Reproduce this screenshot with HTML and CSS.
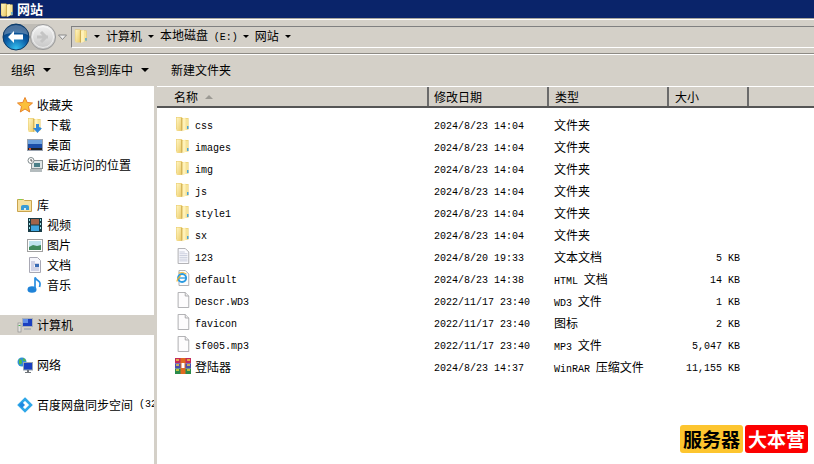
FILE: index.html
```html
<!DOCTYPE html>
<html lang="zh-CN">
<head>
<meta charset="utf-8">
<title>网站</title>
<link rel="stylesheet" href="styles.css">
</head>
<body>
<svg class="defs" width="0" height="0">
  <defs>
    <linearGradient id="fy" x1="0" y1="0" x2="1" y2="1"><stop offset="0" stop-color="#fff6c4"/><stop offset="1" stop-color="#eccb68"/></linearGradient>
    <symbol id="folder" viewBox="0 0 16 16">
      <path d="M1 1h5.500l1 1h6v11.500H1z" fill="#e8c763"/>
      <path d="M1.500 1.500h5v13l-1 .5H1.500z" fill="url(#fy)"/>
      <path d="M6.500 2.500h6.500v11H6.500z" fill="#f6e398"/>
      <path d="M7.500 2.500l3-1v12.500l-3 1.500z" fill="#fff2b8"/>
      <path d="M6.800 2v13" stroke="#cba748" stroke-width="1"/>
      <path d="M12 10h1.500v3H12z" fill="#4aa3d8"/>
    </symbol>
    <symbol id="page" viewBox="0 0 16 18">
      <path d="M2.500 .5h8l4 4v13h-12z" fill="#fdfcfd" stroke="#a5a5a8"/>
      <path d="M10.500 .5v4h4" fill="#eee" stroke="#a5a5a8"/>
    </symbol>
    <symbol id="textpage" viewBox="0 0 16 18">
      <path d="M2.500 .5h8l4 4v13h-12z" fill="#fafafe" stroke="#a5a5a8"/>
      <path d="M4 4.500h6M4 6.500h9M4 8.500h9M4 10.500h9M4 12.500h9M4 14.500h9" stroke="#c3c8d8"/>
    </symbol>
  </defs>
</svg>
<div class="window">
  <header class="titlebar">
    <svg class="ico-title"><use href="#folder"/></svg>
    <span class="title-text">网站</span>
  </header>

  <div class="navbar">
    <svg class="nav-btns" viewBox="0 0 68 28" width="68" height="28">
      <defs>
        <radialGradient id="bk" cx=".5" cy=".95" r=".8"><stop offset="0" stop-color="#35c0f0"/><stop offset=".6" stop-color="#0a5ca6"/><stop offset="1" stop-color="#063c78"/></radialGradient>
        <linearGradient id="fw" x1="0" y1="0" x2="0" y2="1"><stop offset="0" stop-color="#f2f2f2"/><stop offset="1" stop-color="#c5c5c5"/></linearGradient>
      </defs>
      <path d="M15 1h27a13 13 0 0 1 0 26H15z" fill="#bfbcb6"/>
      <circle cx="42" cy="14" r="12.500" fill="url(#fw)" stroke="#9a9a9a"/>
      <path d="M49 14h-11M42 9l5 5-5 5" transform="translate(-2 0) rotate(0)" fill="none" stroke="#c4c4c4" stroke-width="3"/>
      <circle cx="42" cy="14" r="10.500" fill="none" stroke="#fff" stroke-opacity=".6"/>
      <circle cx="15" cy="14" r="13" fill="url(#bk)" stroke="#0d3a66"/>
      <path d="M3 12a12 10 0 0 1 24 0c-6-3-18-3-24 0z" fill="#fff" fill-opacity=".28"/>
      <path d="M7 14l6-6v3.500h9v5h-9V20z" fill="#fff"/>
      <path d="M57.500 12h8l-4 4.500z" fill="#eee" stroke="#8a8a8a"/>
    </svg>
    <div class="address">
      <svg class="ico-addr"><use href="#folder"/></svg>
      <i class="arrow a-first"></i><span class="crumb">计算机</span>
      <i class="arrow"></i><span class="crumb">本地磁盘 <span class="lat">(E:)</span></span>
      <i class="arrow"></i><span class="crumb">网站</span>
      <i class="arrow"></i>
    </div>
  </div>

  <div class="cmdbar">
    <span class="cmd">组织<i class="arrow big"></i></span>
    <span class="cmd">包含到库中<i class="arrow big"></i></span>
    <span class="cmd">新建文件夹</span>
  </div>

  <main class="body">
    <nav class="side">
      <ul class="tree">
        <li class="top"><svg class="ic" viewBox="0 0 16 16"><path d="M8 .5l2.200 5 5.300.5-4 3.500 1.200 5.500L8 12l-4.700 3 1.200-5.500-4-3.500 5.300-.5z" fill="#fbc03a" stroke="#e8842a"/></svg>收藏夹</li>
        <li class="sub"><svg class="ic"><use href="#folder"/></svg><svg class="ic over" viewBox="0 0 16 16"><path d="M9 7h3v4h3l-4.500 5L6 11h3z" fill="#2f86d8"/></svg>下载</li>
        <li class="sub"><svg class="ic" viewBox="0 0 16 16"><rect x=".5" y="2.500" width="15" height="11" fill="#1c4fa8" stroke="#9aa3b0"/><rect x="1" y="3" width="14" height="4" fill="#6ea2dc"/><rect x="1" y="11" width="14" height="2" fill="#222"/><rect x="2" y="11" width="2" height="2" fill="#d8532a"/></svg>桌面</li>
        <li class="sub"><svg class="ic" viewBox="0 0 16 16"><rect x="4.500" y="3.500" width="11" height="8" fill="#dfe5e6" stroke="#8a9396"/><rect x="7" y="6" width="6" height="4" fill="#4a7f88"/><rect x="3" y="12" width="12" height="3" fill="#b4bcbe"/><circle cx="4" cy="3.500" r="3" fill="#fff" stroke="#7f8a8c"/><path d="M4 2v2h1.500" stroke="#555" fill="none"/></svg>最近访问的位置</li>
        <li class="gap"></li>
        <li class="top"><svg class="ic" viewBox="0 0 16 16"><path d="M.5 2.500h6l1 1h7v11H.5z" fill="#f6e0a0" stroke="#c9a44e"/><rect x="2" y="2" width="3" height="1" fill="#7ed14a"/><path d="M4 13V9.500q0-1.500 2-1.500h4q2 0 2 1.500V13z" fill="#3a9ad6"/><path d="M7 13v-2h2v2z" fill="#d6ecf8"/></svg>库</li>
        <li class="sub"><svg class="ic" viewBox="0 0 16 16"><rect x="1" y="1" width="14" height="14" fill="#183b46"/><rect x="4" y="2" width="8" height="5.500" fill="#a0634a"/><rect x="4" y="8.500" width="8" height="5.500" fill="#3fa5e0"/><path d="M2 2h1v2H2zM2 6h1v2H2zM2 10h1v2H2zM13 2h1v2h-1zM13 6h1v2h-1zM13 10h1v2h-1z" fill="#9fe4e8"/></svg>视频</li>
        <li class="sub"><svg class="ic" viewBox="0 0 16 16"><rect x=".5" y="2.500" width="15" height="12" fill="#fff" stroke="#a0a0a0"/><rect x="2" y="4" width="12" height="9" fill="#bfe3ee"/><path d="M2 10l4-2 4 1 4-1v5H2z" fill="#3f8a5c"/></svg>图片</li>
        <li class="sub"><svg class="ic" viewBox="0 0 16 16"><path d="M2.500.5h8l3 3v12h-11z" fill="#f6f6fc" stroke="#a8a8b4"/><path d="M4 5h4M4 7h8M4 9h3M4 11h8M4 13h8" stroke="#a9aed0"/><rect x="8" y="7" width="4" height="3" fill="#3a6bb4"/></svg>文档</li>
        <li class="sub"><svg class="ic" viewBox="0 0 16 16"><ellipse cx="5" cy="12.500" rx="4.500" ry="3.200" fill="#1f83d8"/><path d="M8 12V.5q1 2 3.500 3.500t1 6" fill="none" stroke="#2a8ee0" stroke-width="1.700"/></svg>音乐</li>
        <li class="gap"></li>
        <li class="top selected"><svg class="ic" viewBox="0 0 16 16"><rect x="5.500" y="1.500" width="10" height="8" fill="#1a3fc0" stroke="#a8b0b8"/><rect x="6" y="2" width="5" height="4" fill="#5f8de8"/><rect x="7" y="11" width="7" height="2" fill="#b0b4b8"/><rect x="1" y="6" width="3" height="9" fill="#e4e4e0" stroke="#909090" stroke-width=".7"/><rect x="1.500" y="8" width="2" height="1" fill="#4caf50"/></svg>计算机</li>
        <li class="gap"></li>
        <li class="top"><svg class="ic" viewBox="0 0 16 16"><circle cx="5" cy="5" r="4.500" fill="#2f8fd8"/><path d="M2 2q3 0 3 3T2 7zM6 1q3 1 3 3H6z" fill="#53b84a"/><rect x="6.500" y="5.500" width="9" height="7.500" fill="#1a3fc0" stroke="#9aa4b0"/><path d="M10 13h2v2h2v1H8v-1h2z" fill="#70757a"/></svg>网络</li>
        <li class="gap"></li>
        <li class="top"><svg class="ic" viewBox="0 0 16 16"><path d="M8 2l6 6-6 6-6-6z" fill="none" stroke="#2fa7e8" stroke-width="2.600"/><path d="M2 8l3-3 3 3-3 3z" fill="#1e88e0"/></svg>百度网盘同步空间<span class="lat tail">(32</span></li>
      </ul>
    </nav>

    <section class="content">
      <div class="headers">
        <div class="hcell c-name">名称<i class="sort"></i></div>
        <div class="hcell c-date">修改日期</div>
        <div class="hcell c-type">类型</div>
        <div class="hcell c-size">大小</div>
        <div class="hcell c-rest"></div>
      </div>
      <div class="rows">
        <div class="row"><div class="c-name n"><svg class="ic"><use href="#folder"/></svg><span class="lat">css</span></div><div class="c-date d">2024/8/23 14:04</div><div class="c-type t">文件夹</div><div class="c-size s"></div></div>
        <div class="row"><div class="c-name n"><svg class="ic"><use href="#folder"/></svg><span class="lat">images</span></div><div class="c-date d">2024/8/23 14:04</div><div class="c-type t">文件夹</div><div class="c-size s"></div></div>
        <div class="row"><div class="c-name n"><svg class="ic"><use href="#folder"/></svg><span class="lat">img</span></div><div class="c-date d">2024/8/23 14:04</div><div class="c-type t">文件夹</div><div class="c-size s"></div></div>
        <div class="row"><div class="c-name n"><svg class="ic"><use href="#folder"/></svg><span class="lat">js</span></div><div class="c-date d">2024/8/23 14:04</div><div class="c-type t">文件夹</div><div class="c-size s"></div></div>
        <div class="row"><div class="c-name n"><svg class="ic"><use href="#folder"/></svg><span class="lat">style1</span></div><div class="c-date d">2024/8/23 14:04</div><div class="c-type t">文件夹</div><div class="c-size s"></div></div>
        <div class="row"><div class="c-name n"><svg class="ic"><use href="#folder"/></svg><span class="lat">sx</span></div><div class="c-date d">2024/8/23 14:04</div><div class="c-type t">文件夹</div><div class="c-size s"></div></div>
        <div class="row"><div class="c-name n"><svg class="ic"><use href="#textpage"/></svg><span class="lat">123</span></div><div class="c-date d">2024/8/20 19:33</div><div class="c-type t">文本文档</div><div class="c-size s">5 KB</div></div>
        <div class="row"><div class="c-name n"><svg class="ic" viewBox="0 0 16 18"><path d="M3.500 .5h7l4 4v13h-11z" fill="#fcfcfc" stroke="#a5a5a8"/><circle cx="7" cy="9" r="4.500" fill="none" stroke="#2a9ae0" stroke-width="2.200"/><path d="M3 9h8" stroke="#2a9ae0" stroke-width="1.500"/><path d="M1.500 13q-1-2 4-7" fill="none" stroke="#f4b120" stroke-width="1.300"/><path d="M3 3.500q5-2 9 1" fill="none" stroke="#f4b120" stroke-width="1"/></svg><span class="lat">default</span></div><div class="c-date d">2024/8/23 14:38</div><div class="c-type t"><span class="lat">HTML</span> 文档</div><div class="c-size s">14 KB</div></div>
        <div class="row"><div class="c-name n"><svg class="ic"><use href="#page"/></svg><span class="lat">Descr.WD3</span></div><div class="c-date d">2022/11/17 23:40</div><div class="c-type t"><span class="lat">WD3</span> 文件</div><div class="c-size s">1 KB</div></div>
        <div class="row"><div class="c-name n"><svg class="ic"><use href="#page"/></svg><span class="lat">favicon</span></div><div class="c-date d">2022/11/17 23:40</div><div class="c-type t">图标</div><div class="c-size s">2 KB</div></div>
        <div class="row"><div class="c-name n"><svg class="ic"><use href="#page"/></svg><span class="lat">sf005.mp3</span></div><div class="c-date d">2022/11/17 23:40</div><div class="c-type t"><span class="lat">MP3</span> 文件</div><div class="c-size s">5,047 KB</div></div>
        <div class="row"><div class="c-name n"><svg class="ic" viewBox="0 0 16 16"><rect y="0" width="16" height="5.300" fill="#c42a5a"/><rect y="5.300" width="16" height="5.300" fill="#4a4fb0"/><rect y="10.600" width="16" height="5.400" fill="#2a8a4a"/><rect x="5.500" width="5" height="16" fill="#e06a20"/><rect x="6.500" y="5" width="3" height="5" fill="#fff"/><path d="M1 2h3M1 7h3M1 12h3M12 2h3M12 7h3M12 12h3" stroke="#f2d040" stroke-width="1.500"/></svg><span class="zh">登陆器</span></div><div class="c-date d">2024/8/23 14:37</div><div class="c-type t"><span class="lat">WinRAR</span> 压缩文件</div><div class="c-size s">11,155 KB</div></div>
      </div>
    </section>
  </main>

  <div class="mark">
    <span class="badge yellow">服务器</span>
    <span class="badge red">大本营</span>
  </div>
</div>
</body>
</html>
```
FILE: styles.css
```css
* { box-sizing: border-box; margin: 0; padding: 0; }
html, body { width: 814px; height: 464px; overflow: hidden; }
body { background: #fff; font-family: "Noto Sans CJK SC", "Liberation Sans", sans-serif; font-size: 12px; color: #000; }
.defs { position: absolute; }
i { font-style: normal; }
.lat { font-family: "Liberation Mono", "DejaVu Sans Mono", monospace; font-size: 10px; }

.window { position: relative; width: 814px; height: 464px; display: flex; flex-direction: column; }

.titlebar { height: 18px; background: #0a246a; color: #fff; font-weight: 700; display: flex; align-items: center; gap: 2px; flex: none; }
.ico-title { width: 15px; height: 16px; margin-top: 2px; flex: none; }
.title-text { font-size: 13px; line-height: 16px; }

.navbar { height: 36px; flex: none; background: #d4d0c8; border-top: 1px solid #a9a69f; box-shadow: inset 0 1px 0 #fff; border-bottom: 1px solid #8d8a84; display: flex; align-items: center; padding: 2px 0 0 1px; }
.nav-btns { flex: none; }
.address { flex: 1; height: 22px; margin-left: 2px; border-top: 1px solid #808080; border-left: 1px solid #808080; border-bottom: 1px solid #fff; display: flex; align-items: center; padding: 0 0 2px 2px; white-space: nowrap; }
.ico-addr { width: 15px; height: 16px; flex: none; }
.arrow { display: inline-block; width: 0; height: 0; border-left: 3px solid transparent; border-right: 3px solid transparent; border-top: 3px solid #000; margin: 1px 6px 0 6px; flex: none; }
.a-first { margin-left: 5px; }
.crumb { line-height: 16px; }
.crumb .lat { margin: 0 -1px 0 3px; }

.cmdbar { height: 32px; flex: none; background: #d4d0c8; border-top: 1px solid #fff; display: flex; align-items: center; padding: 0 0 2px 11px; gap: 22px; }
.cmd { display: inline-flex; align-items: center; line-height: 16px; }
.arrow.big { border-left-width: 4px; border-right-width: 4px; border-top-width: 4px; margin: 1px 0 0 8px; }

.body { flex: 1; display: flex; min-height: 0; }
.side { width: 157px; flex: none; background: #fff; border-right: 3px solid #d4d0c8; padding-top: 9px; overflow: hidden; }
.tree { list-style: none; }
.tree li { height: 20px; display: flex; align-items: center; position: relative; white-space: nowrap; overflow: hidden; padding-bottom: 2px; }
.tree .top { padding-left: 17px; }
.tree .sub { padding-left: 27px; }
.tree .selected { background: #d4d0c8; }
.ic { width: 16px; height: 16px; margin-right: 4px; flex: none; }
.tree .ic { margin-top: 2px; }
.tree .ic.over { position: absolute; left: 27px; top: 0; }
.tail { margin-left: 6px; }

.content { flex: 1; min-width: 0; }
.headers { height: 22px; display: flex; background: #d4d0c8; border-top: 1px solid #fff; border-bottom: 2px solid #555; }
.hcell { height: 19px; line-height: 18px; border-right: 2px solid #6b6b6b; padding-left: 6px; display: flex; align-items: center; }
.c-name { width: 272px; flex: none; }
.c-date { width: 120px; flex: none; }
.c-type { width: 120px; flex: none; }
.c-size { width: 80px; flex: none; }
.hcell.c-name { padding-left: 17px; }
.hcell.c-date { padding-left: 5px; }
.hcell.c-rest { flex: 1; border: 0; }
.sort { display: inline-block; width: 0; height: 0; border-left: 4px solid transparent; border-right: 4px solid transparent; border-bottom: 4px solid #9c9a94; margin-left: 7px; }

.rows { padding-top: 6px; }
.row { height: 22px; display: flex; align-items: center; white-space: nowrap; }
.n { display: flex; align-items: center; padding-left: 18px; }
.n .ic { margin-bottom: 2px; }
.n .lat { padding-top: 2px; }
.zh { margin-bottom: 2px; }
.d { padding: 2px 0 0 5px; font-family: "Liberation Mono", "DejaVu Sans Mono", monospace; font-size: 10px; }
.t { padding: 0 0 2px 5px; }
.t .lat { margin-right: 3px; }
.s { padding: 2px 9px 0 0; text-align: right; font-family: "Liberation Mono", "DejaVu Sans Mono", monospace; font-size: 10px; }

.mark { position: absolute; left: 680px; top: 425px; display: flex; gap: 2px; }
.badge { width: 63px; height: 28px; border-radius: 3px; font-size: 19px; font-weight: 700; line-height: 27px; text-align: center; }
.yellow { background: #fdc52f; color: #000; }
.red { background: #fc0000; color: #fff; }
```
